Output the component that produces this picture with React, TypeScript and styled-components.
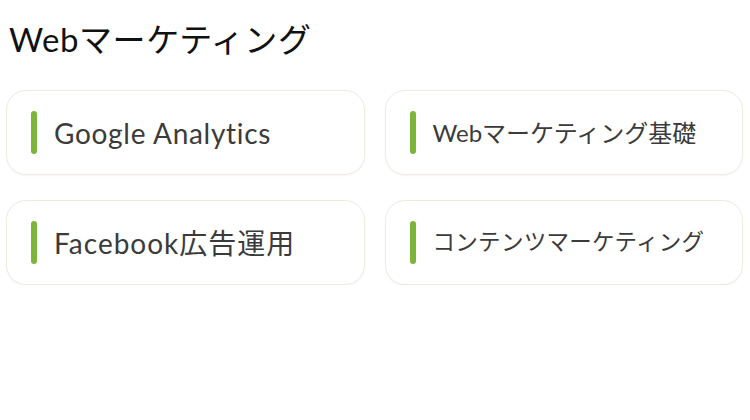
import React from 'react';
import styled, { createGlobalStyle } from 'styled-components';

const GlobalStyle = createGlobalStyle`
  html, body {
    margin: 0;
    padding: 0;
    background: #ffffff;
  }
  body {
    font-family: Lato, "Noto Sans CJK JP", sans-serif;
  }
`;

const Page = styled.main`
  padding: 16px 7px 0 6px;
`;

const Title = styled.h1`
  margin: 0 0 28px 3px;
  font-size: 33px;
  font-weight: 400;
  line-height: 46px;
  color: #111111;
  letter-spacing: 0.6px;
`;

const Grid = styled.div`
  display: grid;
  grid-template-columns: 1fr 1fr;
  column-gap: 20px;
  row-gap: 25px;
`;

const Card = styled.a`
  display: flex;
  align-items: center;
  gap: 17px;
  height: 85px;
  box-sizing: border-box;
  padding-left: 24px;
  border: 1px solid #efebe2;
  border-radius: 20px;
  background: #ffffff;
  box-shadow: 0 1px 2px rgba(120, 100, 60, 0.06);
  text-decoration: none;
`;

const Bar = styled.span`
  flex: none;
  width: 6px;
  height: 43px;
  border-radius: 3px;
  background: #7db53a;
`;

const Label = styled.span<{ $size: number; $spacing: number }>`
  font-size: ${(p) => p.$size}px;
  letter-spacing: ${(p) => p.$spacing}px;
  color: #3b3b3b;
  white-space: nowrap;
  line-height: 1;
`;

const topics = [
  { label: 'Google Analytics', size: 28, spacing: 0.7 },
  { label: 'Webマーケティング基礎', size: 24, spacing: 0 },
  { label: 'Facebook広告運用', size: 28, spacing: 1 },
  { label: 'コンテンツマーケティング', size: 22.5, spacing: 0.3 },
];

export default function App() {
  return (
    <>
      <GlobalStyle />
      <Page>
        <Title>Webマーケティング</Title>
        <Grid>
          {topics.map((t) => (
            <Card key={t.label} href="#">
              <Bar />
              <Label $size={t.size} $spacing={t.spacing}>
                {t.label}
              </Label>
            </Card>
          ))}
        </Grid>
      </Page>
    </>
  );
}
